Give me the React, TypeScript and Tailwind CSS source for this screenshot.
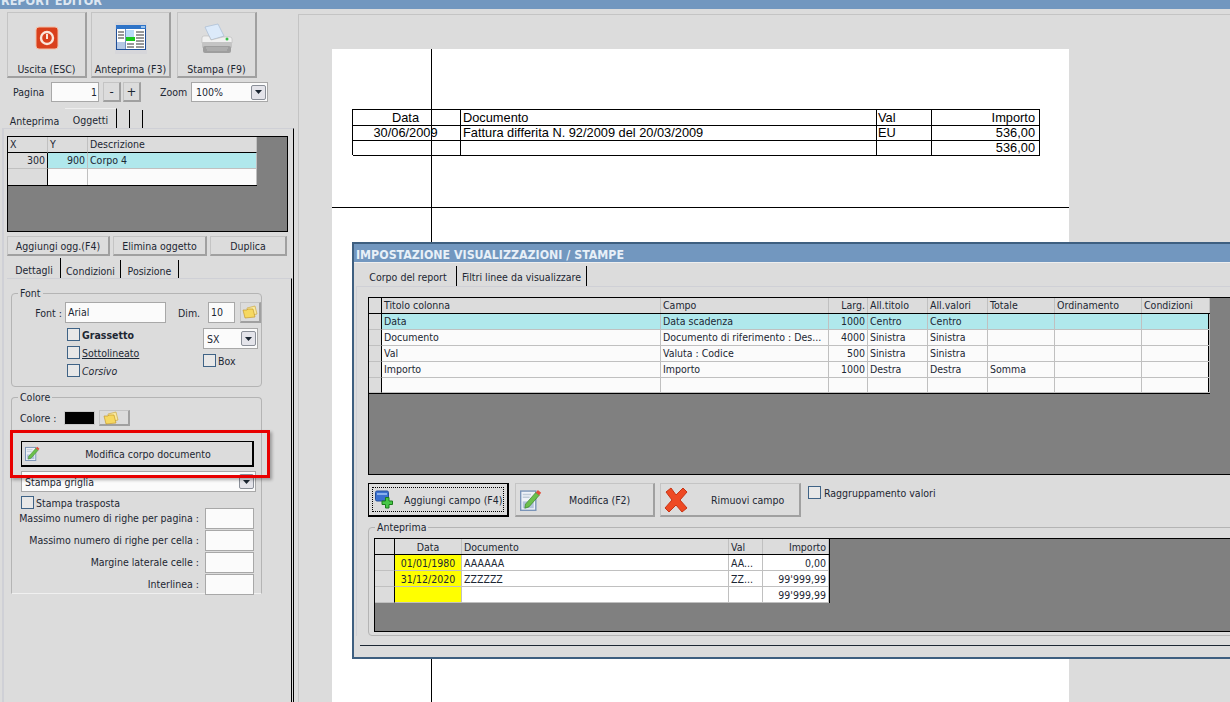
import type { ReactNode } from 'react';

const btn = 'flex items-center justify-center bg-[#dcdcdc] border border-[#c4c4c4] border-r-2 border-b-2 border-r-[#a0a0a0] border-b-[#a0a0a0]';
const field = 'bg-[#fbfbfb] border border-[#a8a8a8]';
const cell = 'px-[2px] border-r border-b border-[#c0c0c0] leading-[15px] truncate';
const head = 'px-[2px] border-r border-[#c0c0c0] bg-[#dcdcdc] leading-[15px] truncate';

function PowerIcon() {
  return (
    <svg width="24" height="24" viewBox="0 0 24 24">
      <rect x="1" y="1" width="22" height="22" rx="3" fill="#d9401c" stroke="#f3c0a8" />
      <circle cx="12" cy="12" r="6" fill="none" stroke="#fbe6da" strokeWidth="2.4" />
      <path d="M12 8v5" stroke="#fbe6da" strokeWidth="2" />
    </svg>
  );
}

function PreviewIcon() {
  return (
    <svg width="32" height="32" viewBox="0 0 32 32">
      <rect x="0" y="0" width="32" height="32" fill="#d6d6da" />
      <rect x="1.500" y="3.500" width="29" height="24" fill="#fff" stroke="#1f4f98" />
      <rect x="1" y="3" width="30" height="4" fill="#2f74c8" />
      <rect x="26" y="4" width="4" height="2" fill="#9cc4ec" />
      <rect x="2" y="20" width="8" height="7" fill="#b4c8e4" />
      <rect x="10" y="7" width="1" height="20" fill="#7090c0" />
      <rect x="11" y="8" width="8" height="7" fill="#b8dcf8" />
      <rect x="11" y="15" width="9" height="4" fill="#18c81c" />
      <path d="M3 10h6M3 13h6M3 16h6M21 10h8M21 13h8M21 16h8M21 19h8M21 22h8M21 25h8M12 22h7M12 25h7" stroke="#333" strokeWidth="1" />
    </svg>
  );
}

function PrinterIcon() {
  return (
    <svg width="32" height="32" viewBox="0 0 32 32">
      <path d="M4 4 L17 1 L23 13 L10 17Z" fill="#dceafa" stroke="#a8bcd4" strokeWidth="0.7" />
      <path d="M1 15 Q1 13 3 13 H8 L10 17 L22 14 H29 Q31 14 31 16 V20 L1 20Z" fill="#f0f0f0" stroke="#b0b0b0" strokeWidth="0.5" />
      <rect x="1" y="19" width="30" height="6" rx="1" fill="#c4c4c4" />
      <rect x="2" y="23" width="28" height="7" rx="2" fill="#9e9e9e" />
      <path d="M5 25h22M6 27h20" stroke="#c8c8c8" strokeWidth="0.7" />
      <circle cx="26" cy="16" r="1.500" fill="#38c048" />
    </svg>
  );
}

function FolderIcon() {
  return (
    <svg width="16" height="14" viewBox="0 0 16 14">
      <path d="M5 3 L13 1 L15 9 L6 11Z" fill="#f8e9a0" stroke="#c8a030" strokeWidth="0.6" />
      <path d="M1 5 H5 L6 4 H11 L13 12 L3 13Z" fill="#f6d860" stroke="#c09020" strokeWidth="0.6" />
    </svg>
  );
}

function NoteIcon({ size }: { size: number }) {
  return (
    <svg width={size} height={size} viewBox="0 0 16 16">
      <rect x="0.500" y="1.500" width="11" height="14" fill="#eef2f8" stroke="#7a94b8" />
      <rect x="2" y="9" width="8" height="5" fill="#b4c4dc" />
      <path d="M2 4h6M2 6h5" stroke="#c0ccd8" />
      <path d="M4 11 L11.500 2.500 L14 4.500 L6.500 13 L3.500 14Z" fill="#6cc04c" stroke="#388028" strokeWidth="0.5" />
      <path d="M11.500 2.500 L13 0.800 L15.400 2.800 L14 4.500Z" fill="#e0503c" />
    </svg>
  );
}

function AddIcon() {
  return (
    <svg width="20" height="20" viewBox="0 0 20 20">
      <rect x="0.500" y="1" width="13" height="10" rx="1.500" fill="#3a70d0" stroke="#24509c" />
      <rect x="2" y="3" width="10" height="2" fill="#88b0ec" />
      <path d="M10.500 7.500h3.500v3.500h3.500v3.500H14v3.500h-3.500v-3.500H7v-3.500h3.500z" fill="#48c848" stroke="#1c7c1c" />
    </svg>
  );
}

function CrossIcon() {
  return (
    <svg width="24" height="26" viewBox="0 0 24 26">
      <path d="M2 5 L7 1 L12 8 L19 1 L23 5 L16 13 L23 21 L18 25 L12 18 L5 25 L1 21 L8 13Z" fill="#ee4a24" stroke="#c83414" />
    </svg>
  );
}

function DropArrow() {
  return (
    <span className="flex items-center justify-center w-[15px] h-[15px] rounded-[2px] bg-[#e4e4ea] border border-[#8a8f98]">
      <svg width="7" height="4" viewBox="0 0 7 4">
        <path d="M0 0h7L3.500 4z" fill="#1c2733" />
      </svg>
    </span>
  );
}

function Check({ label, className }: { label?: ReactNode; className?: string }) {
  return (
    <div className={`flex items-center h-[13px] gap-[2px] ${className ?? ''}`}>
      <span className="w-[13px] h-[13px] shrink-0 bg-[#e8e8e8] border border-[#3f6386]" />
      {label}
    </div>
  );
}

function Legend({ children }: { children: ReactNode }) {
  return <legend className="ml-[6px] px-[2px] leading-[14px]">{children}</legend>;
}

function RightField({ label }: { label: string }) {
  return (
    <div className="flex items-center justify-end h-[22px] pr-[7px]">
      <span className="mr-[6px]">{label}</span>
      <div className={`w-[49px] h-[21px] ${field}`} />
    </div>
  );
}

function LeftPanel() {
  return (
    <div className="w-[298px] shrink-0 flex flex-col">
      <div className="flex ml-[7px] mt-[3px] h-[66px]">
        <div className={`${btn} w-[80px] flex-col !justify-start pt-[13px]`}>
          <PowerIcon />
          <span className="mt-[12px]">Uscita (ESC)</span>
        </div>
        <div className={`${btn} w-[80px] ml-[4px] flex-col !justify-start pt-[9px]`}>
          <PreviewIcon />
          <span className="mt-[8px]">Anteprima (F3)</span>
        </div>
        <div className={`${btn} w-[80px] ml-[6px] flex-col !justify-start pt-[10px]`}>
          <PrinterIcon />
          <span className="mt-[7px]">Stampa (F9)</span>
        </div>
      </div>

      <div className="flex items-center h-[20px] mt-[4px]">
        <span className="ml-[13px] w-[38px]">Pagina</span>
        <div className={`${field} w-[48px] h-[20px] text-right pr-[1px] leading-[18px]`}>1</div>
        <div className={`${btn} w-[18px] h-[20px] ml-[4px] text-[13px]`}>-</div>
        <div className={`${btn} w-[18px] h-[20px] ml-[2px] text-[13px]`}>+</div>
        <span className="ml-[19px] w-[31px]">Zoom</span>
        <div className={`${field} w-[77px] h-[20px] flex items-center justify-between pl-[4px] pr-[1px]`}>
          100%
          <DropArrow />
        </div>
      </div>

      <div className="flex h-[20px] mt-[6px] ml-[4px] items-end">
        <div className="w-[61px] h-[18px] text-center leading-[22px]">Anteprima</div>
        <div className="w-[52px] h-[20px] text-center leading-[22px] bg-[#dcdcdc] border-r border-black border-t border-t-[#eeeeee]">Oggetti</div>
        <div className="w-[13px] h-[18px] border-r border-black" />
        <div className="w-[13px] h-[18px] border-r border-black" />
      </div>

      <div className="flex-1 ml-[2px] w-[292px] border-t border-l-2 border-[#cfd0d6] border-r border-r-black pl-[3px] pt-[7px] relative">
        <div className="w-[281px] h-[96px] bg-[#808080] border border-black">
          <div className="w-[249px] grid grid-cols-[40px_40px_169px] border-r border-b border-black">
            <div className={`${head} border-b border-b-black h-[16px]`}>X</div>
            <div className={`${head} border-b border-b-black h-[16px]`}>Y</div>
            <div className={`${head} border-b border-b-black h-[16px]`}>Descrizione</div>
            <div className={`${cell} bg-[#dcdcdc] text-right h-[16px] border-r-black`}>300</div>
            <div className={`${cell} bg-[#b0e8ec] text-right h-[16px]`}>900</div>
            <div className={`${cell} bg-[#b0e8ec] h-[16px]`}>Corpo 4</div>
            <div className={`${cell} bg-[#dcdcdc] h-[16px] border-r-black border-b-0`} />
            <div className={`${cell} bg-[#fbfbfb] h-[16px] border-b-0`} />
            <div className={`${cell} bg-[#fbfbfb] h-[16px] border-b-0`} />
          </div>
        </div>

        <div className="flex h-[20px] mt-[4px]">
          <div className={`${btn} w-[103px]`}>Aggiungi ogg.(F4)</div>
          <div className={`${btn} w-[94px] ml-[3px]`}>Elimina oggetto</div>
          <div className={`${btn} w-[77px] ml-[3px]`}>Duplica</div>
        </div>

        <div className="flex h-[20px] mt-[2px] items-end ml-[1px]">
          <div className="w-[53px] h-[20px] text-center leading-[24px] border-r border-black">Dettagli</div>
          <div className="w-[60px] h-[18px] text-center leading-[22px] border-r border-black">Condizioni</div>
          <div className="w-[58px] h-[18px] text-center leading-[22px] border-r border-black">Posizione</div>
        </div>

        <div className="mr-[1px] h-[424px] border-t border-[#cfd0d6] border-r border-r-black pt-[7px] pl-[4px]">
          <fieldset className="w-[251px] h-[101px] border border-[#b4b4b4] rounded-[4px]">
            <Legend>Font</Legend>
            <div className="flex items-center h-[21px] mt-[2px]">
              <span className="w-[50px] text-right">Font :</span>
              <div className={`${field} w-[101px] h-[21px] ml-[3px] pl-[2px] leading-[18px]`}>Arial</div>
              <span className="ml-[12px]">Dim.</span>
              <div className={`${field} w-[27px] h-[21px] ml-[8px] pl-[2px] leading-[18px]`}>10</div>
              <div className={`${btn} w-[21px] h-[21px] ml-[5px]`}><FolderIcon /></div>
            </div>
            <div className="flex mt-[5px]">
              <div className="w-[55px]" />
              <div className="w-[136px] flex flex-col gap-[5px]">
                <Check label={<span className="font-bold">Grassetto</span>} />
                <Check label={<span className="underline">Sottolineato</span>} />
                <Check label={<span className="italic">Corsivo</span>} />
              </div>
              <div className="flex flex-col">
                <div className={`${field} w-[55px] h-[21px] flex items-center justify-between pl-[3px] pr-[1px]`}>
                  SX
                  <DropArrow />
                </div>
                <Check label="Box" className="mt-[5px]" />
              </div>
            </div>
          </fieldset>

          <fieldset className="w-[251px] h-[204px] mt-[3px] border border-[#b4b4b4] border-b-[#f0f0f0] rounded-t-[4px]">
            <Legend>Colore</Legend>
            <div className="flex items-center h-[16px] ml-[8px] mt-[6px]">
              <span className="w-[44px]">Colore :</span>
              <div className="w-[31px] h-[14px] bg-black border border-[#c8c8c8]" />
              <div className={`${btn} w-[31px] h-[16px] ml-[4px] !justify-start pl-[3px]`}><FolderIcon /></div>
            </div>
            <div className="ml-[9px] mt-[15px] w-[233px] h-[26px] flex items-center bg-[#dcdcdc] border border-black border-b-2 border-r-2 pl-[3px]">
              <NoteIcon size={15} />
              <span className="flex-1 text-center pl-[4px]">Modifica corpo documento</span>
            </div>
            <div className={`${field} ml-[9px] mt-[4px] w-[235px] h-[21px] flex items-center justify-between pl-[3px] pr-[1px]`}>
              Stampa griglia
              <DropArrow />
            </div>
            <Check label="Stampa trasposta" className="ml-[9px] mt-[4px]" />
            <div className="-mt-[2px]">
              <RightField label="Massimo numero di righe per pagina :" />
              <RightField label="Massimo numero di righe per cella :" />
              <RightField label="Margine laterale celle :" />
              <RightField label="Interlinea :" />
            </div>
          </fieldset>
        </div>

        {/* Red highlight around the button */}
        <div className="absolute left-[6px] top-[301px] w-[260px] h-[48px] border-[3px] border-[#e80000] shadow-[2px_2px_3px_rgba(0,0,0,0.3)]" />
      </div>
    </div>
  );
}

function ReportTable() {
  const rows = [
    ['Data', 'Documento', 'Val', 'Importo'],
    ['30/06/2009', 'Fattura differita N. 92/2009 del 20/03/2009', 'EU', '536,00'],
    ['', '', '', '536,00'],
  ];
  return (
    <div className="ml-[20px] w-[688px] border-t border-l border-black font-['Liberation_Sans',sans-serif] font-stretch-normal text-[12.8px] text-black">
      {rows.map((row, i) => (
        <div key={i} className="grid grid-cols-[108px_416px_55px_108px] h-[15px] leading-[15px]">
          <div className="border-r border-b border-black text-center pr-[2px]">{row[0]}</div>
          <div className="border-r border-b border-black pl-[2px]">{row[1]}</div>
          <div className="border-r border-b border-black pl-[1px]">{row[2]}</div>
          <div className="border-r border-b border-black text-right pr-[4px]">{row[3]}</div>
        </div>
      ))}
    </div>
  );
}

function MainGrid() {
  const rows = [
    ['Data', 'Data scadenza', '1000', 'Centro', 'Centro', '', '', ''],
    ['Documento', 'Documento di riferimento : Des...', '4000', 'Sinistra', 'Sinistra', '', '', ''],
    ['Val', 'Valuta : Codice', '500', 'Sinistra', 'Sinistra', '', '', ''],
    ['Importo', 'Importo', '1000', 'Destra', 'Destra', 'Somma', '', ''],
    ['', '', '', '', '', '', '', ''],
  ];
  const cols = 'grid grid-cols-[13px_279px_168px_39px_60px_60px_67px_87px_68px]';
  return (
    <div className="h-[178px] w-[870px] bg-[#808080] border border-black">
      <div className="w-[841px] border-r-2 border-b border-black">
        <div className={`${cols} h-[16px] border-b border-black`}>
          <div className="bg-[#dcdcdc] border-r border-black" />
          {['Titolo colonna', 'Campo'].map((t) => <div key={t} className={head}>{t}</div>)}
          <div className={`${head} text-right`}>Larg.</div>
          {['All.titolo', 'All.valori', 'Totale', 'Ordinamento', 'Condizioni'].map((t) => <div key={t} className={head}>{t}</div>)}
        </div>
        {rows.map((r, i) => (
          <div key={i} className={`${cols} ${i === 4 ? 'h-[15px]' : 'h-[16px]'} ${i === 0 ? 'bg-[#b0e8ec]' : 'bg-[#fbfbfb]'}`}>
            <div className="bg-[#dcdcdc] border-r border-r-black border-b border-b-[#c0c0c0]" />
            {r.map((c, j) => (
              <div key={j} className={`${cell} ${j === 2 ? 'text-right' : ''}`}>{c}</div>
            ))}
          </div>
        ))}
      </div>
    </div>
  );
}

function PreviewGrid() {
  const rows = [
    ['01/01/1980', 'AAAAAA', 'AA...', '0,00'],
    ['31/12/2020', 'ZZZZZZ', 'ZZ...', "99'999,99"],
    ['', '', '', "99'999,99"],
  ];
  const cols = 'grid grid-cols-[20px_67px_267px_34px_66px]';
  return (
    <div className="ml-[5px] mt-[4px] h-[94px] w-[860px] bg-[#808080] border border-black">
      <div className="w-[455px] border-r border-black">
        <div className={`${cols} h-[16px] border-b border-black`}>
          <div className="bg-[#dcdcdc] border-r border-black" />
          <div className={`${head} text-center pt-[1px]`}>Data</div>
          <div className={`${head} pt-[1px]`}>Documento</div>
          <div className={`${head} pt-[1px]`}>Val</div>
          <div className={`${head} text-right pt-[1px]`}>Importo</div>
        </div>
        {rows.map((r, i) => (
          <div key={i} className={`${cols} h-[16px] bg-white`}>
            <div className="bg-[#dcdcdc] border-r border-r-black border-b border-b-[#c0c0c0]" />
            <div className={`${cell} bg-[#ffff00] text-center pt-[1px]`}>{r[0]}</div>
            <div className={`${cell} pt-[1px]`}>{r[1]}</div>
            <div className={`${cell} pt-[1px]`}>{r[2]}</div>
            <div className={`${cell} text-right pt-[1px]`}>{r[3]}</div>
          </div>
        ))}
      </div>
    </div>
  );
}

function SettingsDialog() {
  return (
    <div className="absolute left-[352px] top-[242px] w-[900px] h-[417px] bg-[#dcdcdc] border-2 border-[#3e5f80]">
      <div className="h-[19px] overflow-hidden bg-[#7297bf] text-[#e8f0f8] font-bold text-[12.3px] leading-[22px] pl-[2px] border-b border-[#eeeeee]">
        IMPOSTAZIONE VISUALIZZAZIONI / STAMPE
      </div>
      <div className="flex h-[20px] mt-[3px] ml-[6px]">
        <div className="w-[97px] text-center leading-[22px] border-r border-black">Corpo del report</div>
        <div className="w-[130px] text-center leading-[23px] border-r border-black">Filtri linee da visualizzare</div>
      </div>
      <div className="ml-[2px] border-t border-l border-[#cfd0d6] pl-[11px] pt-[10px]">
        <MainGrid />
        <div className="flex mt-[8px]">
          <div className="relative w-[141px] h-[34px] flex items-center bg-[#dcdcdc] border border-black border-b-2 border-r-2 pl-[6px]">
            <AddIcon />
            <span className="ml-[9px] pt-[1px]">Aggiungi campo (F4)</span>
            <div className="absolute inset-[3px] border border-dotted border-black" />
          </div>
          <div className={`${btn} w-[140px] h-[34px] ml-[6px] !justify-start pl-[4px]`}>
            <NoteIcon size={22} />
            <span className="ml-[27px] pt-[1px]">Modifica (F2)</span>
          </div>
          <div className={`${btn} w-[141px] h-[34px] ml-[5px] !justify-start pl-[3px]`}>
            <CrossIcon />
            <span className="ml-[23px] pt-[1px]">Rimuovi campo</span>
          </div>
          <Check label={<span className="ml-[1px]">Raggruppamento valori</span>} className="ml-[7px] self-start mt-[3px]" />
        </div>
        <fieldset className="mt-[3px] h-[116px] w-[880px] border border-[#b4b4b4] rounded-[4px]">
          <Legend>Anteprima</Legend>
          <PreviewGrid />
        </fieldset>
      </div>
      <div className="ml-[6px] mt-[9px] border-t border-[#1c2733]" />
    </div>
  );
}

export default function App() {
  return (
    <div className="relative w-[1230px] h-[702px] overflow-hidden whitespace-nowrap bg-[#dcdcdc] font-['DejaVu_Sans',sans-serif] font-stretch-condensed text-[10.5px] leading-[14px] text-[#1c2733]">
      <div className="h-[9px] overflow-hidden bg-[#7297bf]">
        <div className="-mt-[6px] pl-[1px] text-[12.5px] leading-[13px] font-bold text-[#dde7f2]">REPORT EDITOR</div>
      </div>
      <div className="flex h-[693px]">
        <LeftPanel />
        <div className="flex-1 mt-[5px] border-l border-t border-[#c4c4c4] pl-[33px] pt-[34px]">
          <div className="relative w-[737px] h-[653px] bg-white pt-[60px]">
            <ReportTable />
            {/* Ruler guides on the page */}
            <div className="absolute left-[99px] top-0 bottom-0 w-px bg-black" />
            <div className="absolute left-0 right-0 top-[158px] h-px bg-black" />
          </div>
        </div>
      </div>
      <SettingsDialog />
    </div>
  );
}
